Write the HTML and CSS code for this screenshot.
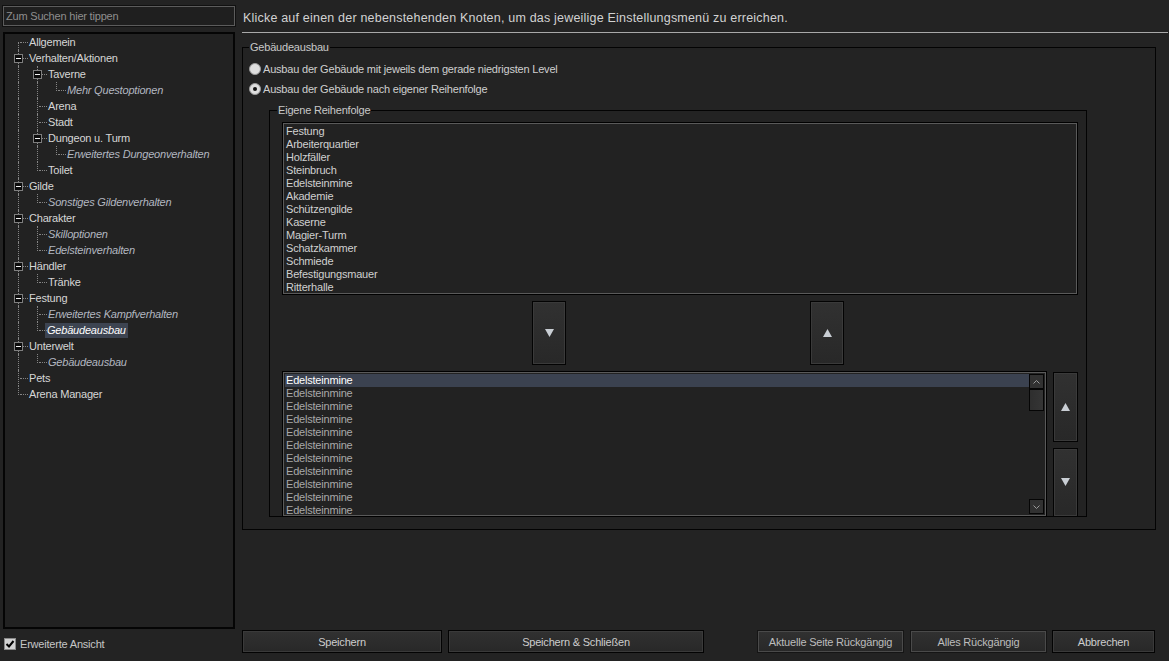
FILE: index.html
```html
<!DOCTYPE html>
<html lang="de">
<head>
<meta charset="utf-8">
<title>Einstellungen</title>
<link rel="stylesheet" href="styles.css">
</head>
<body>
<div class="app">
  <aside class="side">
    <div class="search">Zum Suchen hier tippen</div>
    <div class="tree">
      <div class="row"><i class="g f"></i><span class="lbl">Allgemein</span></div>
      <div class="row"><i class="g t"><b class="box"></b></i><span class="lbl">Verhalten/Aktionen</span></div>
      <div class="row"><i class="g i"></i><i class="g t"><b class="box"></b></i><span class="lbl">Taverne</span></div>
      <div class="row"><i class="g i"></i><i class="g i"></i><i class="g l"></i><span class="lbl it">Mehr Questoptionen</span></div>
      <div class="row"><i class="g i"></i><i class="g t"></i><span class="lbl">Arena</span></div>
      <div class="row"><i class="g i"></i><i class="g t"></i><span class="lbl">Stadt</span></div>
      <div class="row"><i class="g i"></i><i class="g t"><b class="box"></b></i><span class="lbl">Dungeon u. Turm</span></div>
      <div class="row"><i class="g i"></i><i class="g i"></i><i class="g l"></i><span class="lbl it">Erweitertes Dungeonverhalten</span></div>
      <div class="row"><i class="g i"></i><i class="g l"></i><span class="lbl">Toilet</span></div>
      <div class="row"><i class="g t"><b class="box"></b></i><span class="lbl">Gilde</span></div>
      <div class="row"><i class="g i"></i><i class="g l"></i><span class="lbl it">Sonstiges Gildenverhalten</span></div>
      <div class="row"><i class="g t"><b class="box"></b></i><span class="lbl">Charakter</span></div>
      <div class="row"><i class="g i"></i><i class="g t"></i><span class="lbl it">Skilloptionen</span></div>
      <div class="row"><i class="g i"></i><i class="g l"></i><span class="lbl it">Edelsteinverhalten</span></div>
      <div class="row"><i class="g t"><b class="box"></b></i><span class="lbl">Händler</span></div>
      <div class="row"><i class="g i"></i><i class="g l"></i><span class="lbl">Tränke</span></div>
      <div class="row"><i class="g t"><b class="box"></b></i><span class="lbl">Festung</span></div>
      <div class="row"><i class="g i"></i><i class="g t"></i><span class="lbl it">Erweitertes Kampfverhalten</span></div>
      <div class="row"><i class="g i"></i><i class="g l"></i><span class="lbl it sel">Gebäudeausbau</span></div>
      <div class="row"><i class="g t"><b class="box"></b></i><span class="lbl">Unterwelt</span></div>
      <div class="row"><i class="g i"></i><i class="g l"></i><span class="lbl it">Gebäudeausbau</span></div>
      <div class="row"><i class="g t"></i><span class="lbl">Pets</span></div>
      <div class="row"><i class="g l"></i><span class="lbl">Arena Manager</span></div>
    </div>
    <div class="check">
      <span class="cb"><svg width="10" height="10" viewBox="0 0 10 10"><path d="M1.5 5 L4 7.5 L8.5 2" fill="none" stroke="#000" stroke-width="2"/></svg></span>
      <span>Erweiterte Ansicht</span>
    </div>
  </aside>

  <main class="main">
    <header class="head">Klicke auf einen der nebenstehenden Knoten, um das jeweilige Einstellungsmenü zu erreichen.</header>

    <fieldset class="grp outer">
      <legend>Gebäudeausbau</legend>
      <div class="radio first"><span class="rb"></span><span>Ausbau der Gebäude mit jeweils dem gerade niedrigsten Level</span></div>
      <div class="radio"><span class="rb on"></span><span>Ausbau der Gebäude nach eigener Reihenfolge</span></div>

      <fieldset class="grp inner">
        <legend>Eigene Reihenfolge</legend>
        <div class="list list1">
          <div>Festung</div>
          <div>Arbeiterquartier</div>
          <div>Holzfäller</div>
          <div>Steinbruch</div>
          <div>Edelsteinmine</div>
          <div>Akademie</div>
          <div>Schützengilde</div>
          <div>Kaserne</div>
          <div>Magier-Turm</div>
          <div>Schatzkammer</div>
          <div>Schmiede</div>
          <div>Befestigungsmauer</div>
          <div>Ritterhalle</div>
        </div>

        <div class="moves">
          <div class="btn mv"><svg width="9" height="8" viewBox="0 0 9 8"><path d="M0 0 H9 L4.5 8 Z" fill="#c9ced4"/></svg></div>
          <div class="btn mv"><svg width="9" height="8" viewBox="0 0 9 8"><path d="M0 8 H9 L4.5 0 Z" fill="#c9ced4"/></svg></div>
        </div>

        <div class="order">
          <div class="list list2">
            <div class="items">
              <div class="cur">Edelsteinmine</div>
              <div>Edelsteinmine</div>
              <div>Edelsteinmine</div>
              <div>Edelsteinmine</div>
              <div>Edelsteinmine</div>
              <div>Edelsteinmine</div>
              <div>Edelsteinmine</div>
              <div>Edelsteinmine</div>
              <div>Edelsteinmine</div>
              <div>Edelsteinmine</div>
              <div>Edelsteinmine</div>
            </div>
            <div class="sb">
              <div class="sbtn"><svg width="7" height="4" viewBox="0 0 7 4"><path d="M0.5 3.5 L3.5 0.5 L6.5 3.5" fill="none" stroke="#9a9a9a" stroke-width="1"/></svg></div>
              <div class="thumb"></div>
              <div class="track"></div>
              <div class="sbtn"><svg width="7" height="4" viewBox="0 0 7 4"><path d="M0.5 0.5 L3.5 3.5 L6.5 0.5" fill="none" stroke="#9a9a9a" stroke-width="1"/></svg></div>
            </div>
          </div>
          <div class="sidebtns">
            <div class="btn mv up"><svg width="9" height="8" viewBox="0 0 9 8"><path d="M0 8 H9 L4.5 0 Z" fill="#c9ced4"/></svg></div>
            <div class="btn mv dn"><svg width="9" height="8" viewBox="0 0 9 8"><path d="M0 0 H9 L4.5 8 Z" fill="#c9ced4"/></svg></div>
          </div>
        </div>
      </fieldset>
    </fieldset>

    <footer class="actions">
      <div class="btn act w-save">Speichern</div>
      <div class="btn act w-saveclose">Speichern &amp; Schließen</div>
      <div class="btn act soft w-page">Aktuelle Seite Rückgängig</div>
      <div class="btn act soft w-all">Alles Rückgängig</div>
      <div class="btn act w-cancel">Abbrechen</div>
    </footer>
  </main>
</div>
</body>
</html>
```

FILE: styles.css
```css
* { box-sizing: border-box; }

html, body {
  margin: 0;
  padding: 0;
}

body {
  width: 1169px;
  height: 661px;
  overflow: hidden;
  background: #232323;
  color: #d4d4d4;
  font-family: "Liberation Sans", Arial, sans-serif;
  font-size: 11px;
  letter-spacing: -0.2px;
}

.app {
  display: grid;
  grid-template-columns: 242px 1fr;
  height: 661px;
}

/* ---------- left side ---------- */
.side {
  display: flex;
  flex-direction: column;
  padding: 6px 0 0 3px;
}

.search {
  width: 232px;
  height: 20px;
  border: 1px solid #5c5c5c;
  box-shadow: 0 0 0 1px #111;
  background: #1f1f1f;
  color: #8e8e8e;
  font-size: 11px;
  line-height: 18px;
  padding-left: 2px;
}

.tree {
  margin-top: 6px;
  width: 232px;
  height: 597px;
  border: 2px solid #050505;
  background: #222;
  padding: 0 0 0 4px;
}

.row {
  display: flex;
  height: 16px;
  line-height: 16px;
  white-space: nowrap;
}

.g {
  position: relative;
  flex: none;
  width: 19px;
  height: 16px;
}

.g::before,
.g::after {
  content: "";
  position: absolute;
}

.g.i::before,
.g.t::before {
  left: 9px;
  top: 0;
  height: 16px;
  border-left: 1px dotted #858585;
}

.g.l::before {
  left: 9px;
  top: 0;
  height: 9px;
  border-left: 1px dotted #858585;
}

.g.f::before {
  left: 9px;
  top: 8px;
  height: 8px;
  border-left: 1px dotted #858585;
}

.g.t::after,
.g.l::after,
.g.f::after {
  left: 11px;
  top: 8px;
  width: 8px;
  border-top: 1px dotted #858585;
}

.box {
  position: absolute;
  left: 5px;
  top: 4px;
  width: 9px;
  height: 9px;
  border: 1px solid #7e7e7e;
  background: #0b0b0b;
  z-index: 1;
}

.box::after {
  content: "";
  position: absolute;
  left: 1px;
  top: 3px;
  width: 5px;
  height: 1px;
  background: #f2f2f2;
}

.lbl {
  padding-left: 1px;
  color: #d6d6d6;
}

.lbl.it {
  font-style: italic;
  color: #b2b7c0;
}

.lbl.sel {
  margin-left: -2px;
  padding: 0 2px;
  background: #3d4451;
  color: #fff;
  line-height: 15px;
  height: 15px;
  margin-top: 1px;
}

.check {
  display: flex;
  align-items: center;
  gap: 4px;
  margin-top: 9px;
  padding-left: 1px;
  color: #c6c6c6;
}

.cb {
  display: flex;
  align-items: center;
  justify-content: center;
  width: 12px;
  height: 12px;
  background: #d2d2d2;
  border: 1px solid #8a8a8a;
}

/* ---------- main ---------- */
.main {
  display: flex;
  flex-direction: column;
  padding: 0 1px 8px 0;
}

.head {
  height: 33px;
  padding: 10px 0 0 1px;
  line-height: 16px;
  font-size: 12.5px;
  letter-spacing: 0.2px;
  color: #d2d2d2;
  border-bottom: 1px solid #a9a9a9;
  white-space: nowrap;
}

.grp {
  margin: 0;
  padding: 0;
  border: 1px solid #030303;
  min-width: 0;
}

.grp > legend {
  padding: 0 1px;
  margin-left: 0;
  line-height: 15px;
  color: #c8c8c8;
}

.outer {
  margin-top: 7px;
  width: 914px;
  height: 490px;
  padding: 0 0 0 6px;
}

.radio {
  display: flex;
  align-items: center;
  gap: 2px;
  height: 20px;
  color: #cfcfcf;
}

.radio.first {
  margin-top: 4px;
}

.rb {
  position: relative;
  width: 12px;
  height: 12px;
  border-radius: 50%;
  background: #dedede;
  border: 1px solid #9a9a9a;
}

.rb.on::after {
  content: "";
  position: absolute;
  left: 3px;
  top: 3px;
  width: 4px;
  height: 4px;
  border-radius: 50%;
  background: #111;
}

.inner {
  margin: 4px 0 0 20px;
  width: 818px;
  height: 414px;
  padding: 0 0 0 12px;
}

.inner > legend {
  margin-left: -5px;
}

.list {
  border: 1px solid #000;
  box-shadow: inset 0 0 0 1px #5a5a5a;
  background: #222;
  padding: 2px;
  line-height: 13px;
  white-space: nowrap;
}

.list1 {
  margin-top: 4px;
  width: 796px;
  height: 173px;
  padding: 2px 2px 0 3px;
  color: #d0d0d0;
}

.moves {
  display: flex;
  gap: 244px;
  margin-top: 6px;
  padding-left: 250px;
  height: 64px;
}

.btn {
  display: flex;
  align-items: center;
  justify-content: center;
  border: 1px solid #030303;
  background: linear-gradient(#313131, #282828);
  box-shadow: inset 0 0 0 1px #3a3a3a;
  color: #cfcfcf;
}

.mv {
  width: 34px;
  height: 64px;
}

.order {
  display: flex;
  gap: 6px;
  margin-top: 6px;
  height: 146px;
}

.list2 {
  display: flex;
  width: 765px;
  height: 146px;
  color: #a9a9a9;
}

.items {
  flex: 1;
  height: 142px;
}

.items > div {
  height: 13px;
  padding-left: 1px;
}

.items > div:last-child {
  height: 12px;
  line-height: 12px;
}

.items > .cur {
  background: #3b4250;
  color: #fff;
}

.sb {
  display: flex;
  flex-direction: column;
  width: 15px;
}

.sbtn {
  display: flex;
  align-items: center;
  justify-content: center;
  height: 15px;
  border: 1px solid #050505;
  background: #313131;
}

.thumb {
  height: 22px;
  border: 1px solid #050505;
  background: linear-gradient(90deg, #2e2e2e, #353535);
}

.track {
  flex: 1;
}

.sidebtns {
  display: flex;
  flex-direction: column;
  gap: 6px;
  padding-top: 1px;
  width: 25px;
}

.sidebtns .mv {
  width: 25px;
}

.sidebtns .up { height: 70px; }
.sidebtns .dn { height: 70px; }

/* ---------- footer ---------- */
.actions {
  display: flex;
  gap: 6px;
  margin-top: auto;
  padding-right: 13px;
  height: 23px;
}

.act {
  height: 23px;
  color: #cdcdcd;
}

.act.soft {
  border-color: #151515;
  box-shadow: inset 0 0 0 1px #4a4a4a;
  color: #bdbdbd;
}

.w-save { width: 200px; }
.w-saveclose { width: 256px; }
.w-page { width: 147px; margin-left: auto; }
.w-all { width: 137px; }
.w-cancel { width: 103px; margin-left: -1px; }
```
